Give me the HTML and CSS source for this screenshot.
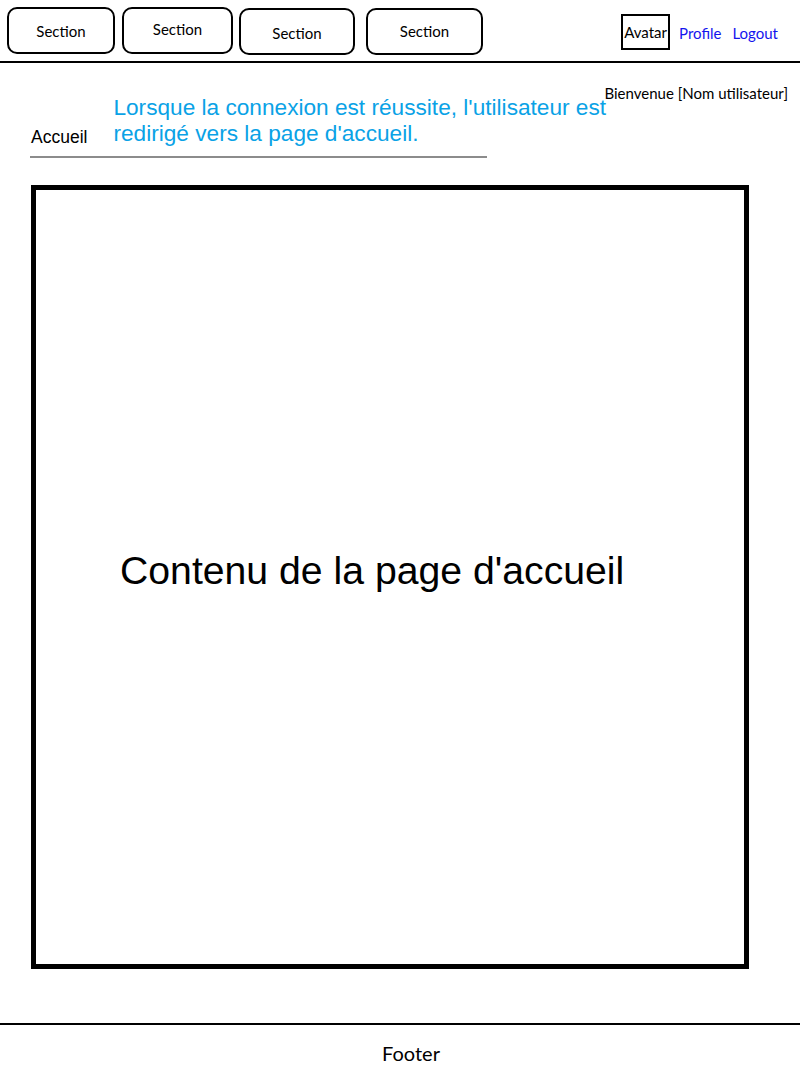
FILE: index.html
```html
<!DOCTYPE html>
<html lang="fr">
<head>
    <meta charset="UTF-8">
    <meta name="viewport" content="width=device-width, initial-scale=1.0">
    <title>Accueil</title>
    <link rel="stylesheet" href="styles.css">
</head>
<body>
    <header class="topbar">
        <nav class="sections">
            <a class="section-btn" href="#">Section</a>
            <a class="section-btn" href="#">Section</a>
            <a class="section-btn" href="#">Section</a>
            <a class="section-btn" href="#">Section</a>
        </nav>
        <div class="user-menu">
            <span class="avatar">Avatar</span>
            <a class="user-link" href="#">Profile</a>
            <a class="user-link" href="#">Logout</a>
        </div>
    </header>

    <div class="page-head">
        <div class="crumb-row">
            <span class="crumb">Accueil</span>
            <p class="note">Lorsque la connexion est réussite, l'utilisateur est<br>redirigé vers la page d'accueil.</p>
            <span class="welcome">Bienvenue [Nom utilisateur]</span>
        </div>
        <div class="crumb-line"></div>
    </div>

    <main class="content-box">
        <p class="content-text">Contenu de la page d'accueil</p>
    </main>

    <footer class="footer">Footer</footer>
</body>
</html>
```

FILE: styles.css
```css
body {
    margin: 0;
    font-family: Lato, "Open Sans", sans-serif;
    color: #000;
    background-color: #fff;
}

.topbar {
    display: flex;
    justify-content: space-between;
    height: 63px;
    border-bottom: 2px solid #000;
    box-sizing: border-box;
}

.sections {
    display: flex;
    align-items: flex-start;
    padding-left: 7px;
}

.section-btn {
    display: flex;
    align-items: center;
    justify-content: center;
    height: 47px;
    box-sizing: border-box;
    border: 2px solid #000;
    border-radius: 10px;
    color: #000;
    text-decoration: none;
    font-size: 15px;
}

.section-btn:nth-child(1) {
    width: 108px;
    margin-top: 7px;
}

.section-btn:nth-child(2) {
    width: 111px;
    margin-top: 7px;
    margin-left: 7px;
    padding-bottom: 4px;
}

.section-btn:nth-child(3) {
    width: 116px;
    margin-top: 8px;
    margin-left: 6px;
    padding-top: 2px;
}

.section-btn:nth-child(4) {
    width: 117px;
    margin-top: 8px;
    margin-left: 11px;
    padding-bottom: 2px;
}

.user-menu {
    display: flex;
    align-items: flex-start;
    padding-top: 14px;
    padding-right: 22px;
}

.avatar {
    display: flex;
    align-items: center;
    justify-content: center;
    width: 49px;
    height: 36px;
    box-sizing: border-box;
    border: 2px solid #000;
    font-size: 15px;
    margin-right: 9px;
}

.user-link {
    color: #1414ee;
    text-decoration: none;
    font-size: 15px;
    line-height: 18px;
    padding-top: 10px;
}

.user-link + .user-link {
    margin-left: 11px;
}

.page-head {
    padding: 0 13px 0 30px;
}

.crumb-row {
    display: flex;
    align-items: flex-end;
    margin-top: 22px;
}

.crumb {
    font-family: "Liberation Sans", Arial, sans-serif;
    font-size: 17.5px;
    line-height: 18px;
    padding-left: 1px;
    white-space: nowrap;
}

.note {
    flex-shrink: 0;
    width: 491px;
    margin: 9px 0 0 26px;
    font-family: "Liberation Sans", Arial, sans-serif;
    font-size: 22.65px;
    line-height: 26px;
    color: #0aa2e6;
    white-space: nowrap;
}

.welcome {
    align-self: flex-start;
    margin-left: auto;
    font-size: 15px;
    line-height: 16px;
    white-space: nowrap;
}

.crumb-line {
    width: 457px;
    height: 2px;
    margin-top: 10px;
    background-color: #8c8c8c;
}

.content-box {
    display: flex;
    align-items: center;
    width: 718px;
    height: 784px;
    margin: 27px 0 0 31px;
    padding: 0 0 12px 84px;
    box-sizing: border-box;
    border: 5px solid #000;
}

.content-text {
    margin: 0;
    font-family: "Liberation Sans", Arial, sans-serif;
    font-size: 39.2px;
}

.footer {
    margin-top: 54px;
    border-top: 2px solid #000;
    padding-top: 17px;
    padding-left: 22px;
    text-align: center;
    font-size: 20px;
    line-height: 22px;
}
```
